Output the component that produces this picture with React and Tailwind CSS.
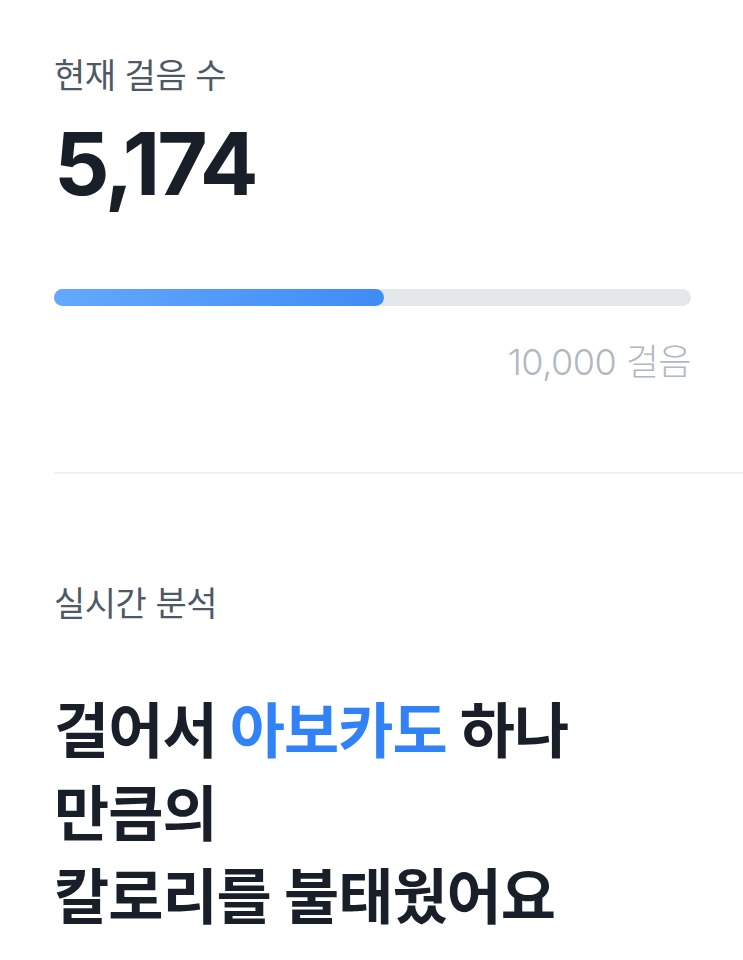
import React from "react";

const FONT = { fontFamily: "Inter, 'Noto Sans CJK KR', sans-serif" };

export default function App() {
  const current = 5174;
  const goal = 10000;
  const pct = 51.8;

  return (
    <div className="min-h-[960px] w-full bg-white text-[#191f28]" style={FONT}>
      <section className="pl-[54px] pr-[52px] pt-[52px]">
        <p className="text-[34px] leading-[48px] text-[#4e5968] font-normal tracking-[-0.5px]">현재 걸음 수</p>
        <p className="mt-[14px] text-[87px] leading-[100px] font-bold tracking-[-3px]">
          {current.toLocaleString("en-US")}
        </p>
        <div className="mt-[75px] h-[17px] w-full rounded-full bg-[#e5e8eb]">
          <div
            className="h-full rounded-full bg-gradient-to-r from-[#64a8ff] to-[#3f8cf5]"
            style={{ width: `${pct}%` }}
          />
        </div>
        <p className="mt-[31px] text-right text-[36px] leading-[50px] font-light text-[#b0b8c1] tracking-[-0.5px]">
          {goal.toLocaleString("en-US")} 걸음
        </p>
      </section>

      <div className="ml-[54px] mt-[85px] h-[2px] bg-[#eef0f2]" />

      <section className="px-[54px] pt-[106px]">
        <p className="text-[34px] leading-[48px] text-[#4e5968] font-normal tracking-[-0.5px]">실시간 분석</p>
        <h1 className="mt-[62px] text-[60px] leading-[83px] font-bold tracking-[-1px]">
          걸어서 <span className="text-[#3182f6]">아보카도</span> 하나
          <br />
          만큼의
          <br />
          칼로리를 불태웠어요
        </h1>
      </section>
    </div>
  );
}
